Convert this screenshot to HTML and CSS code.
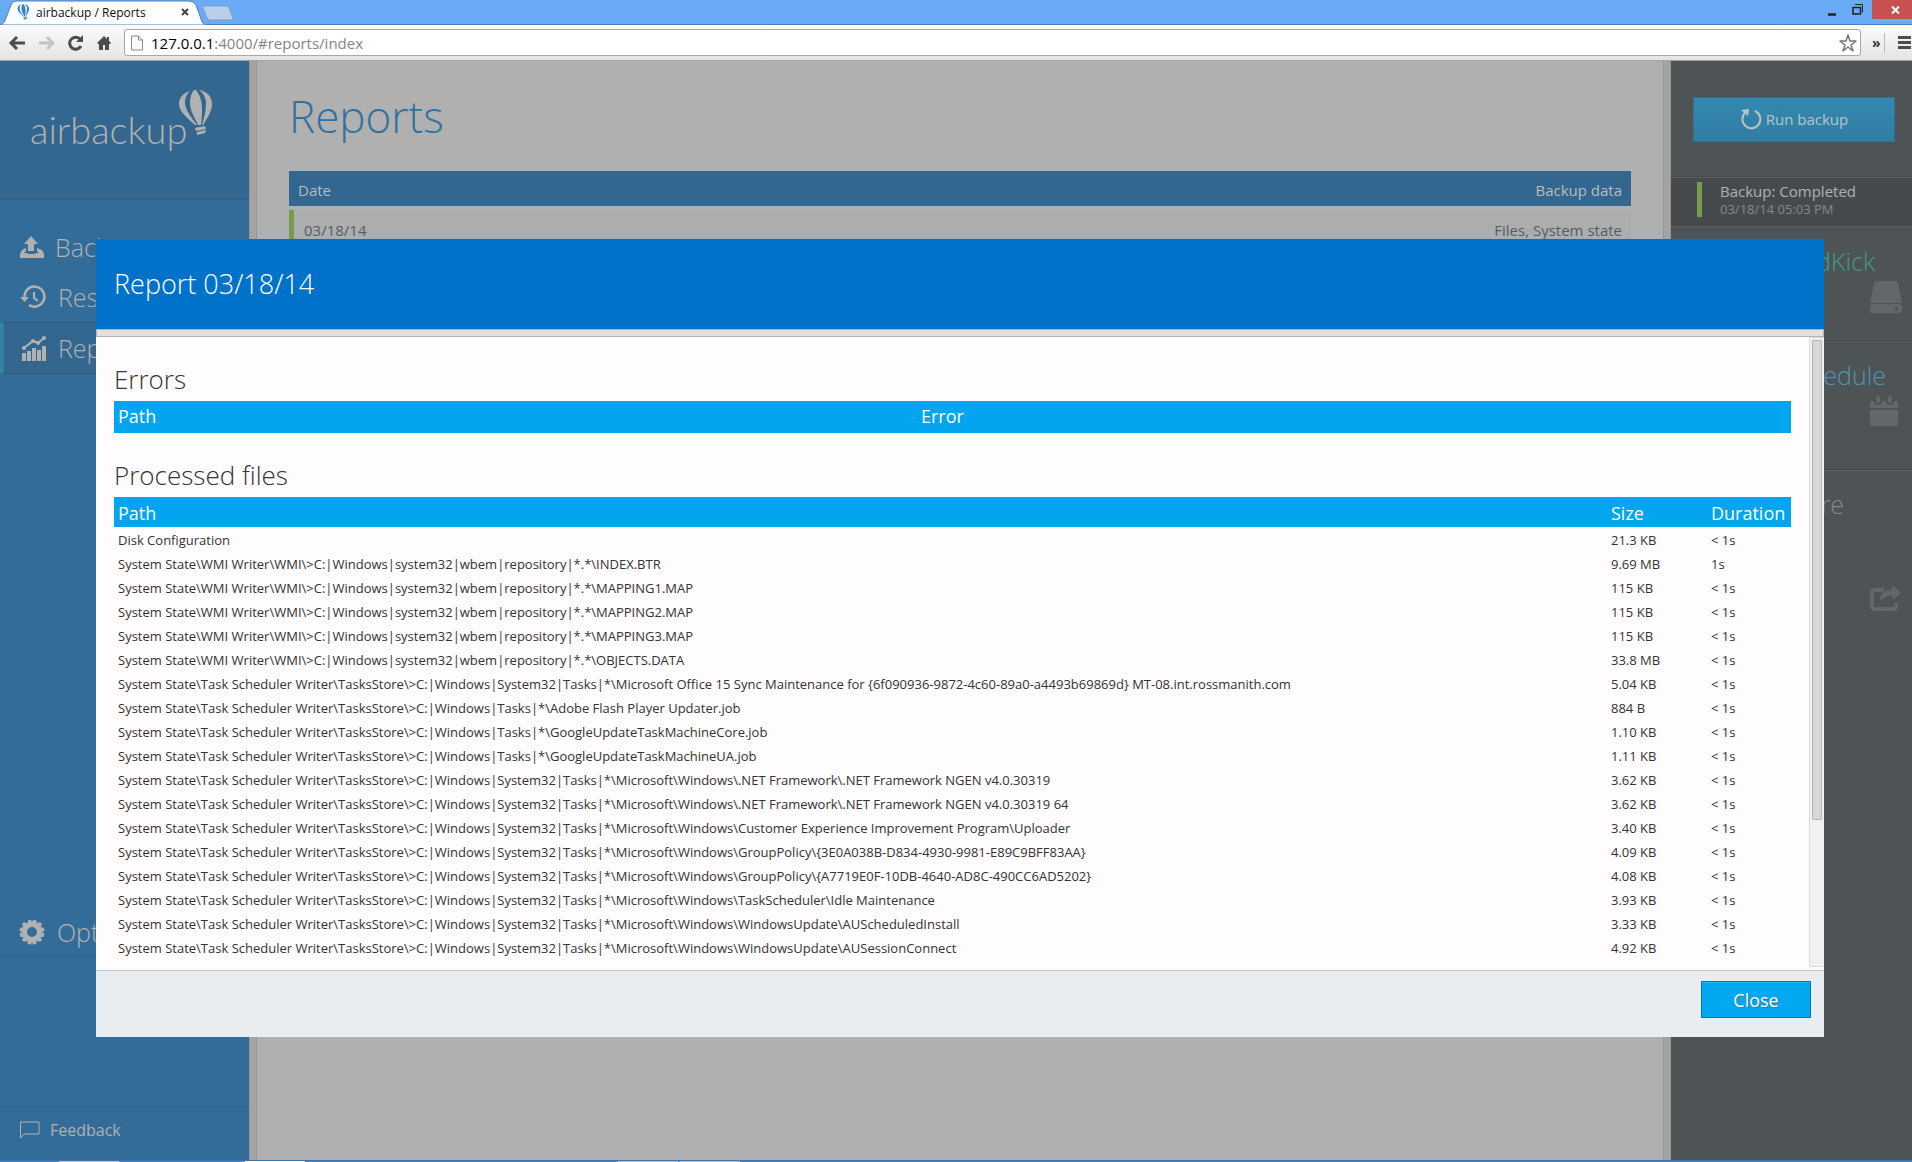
FILE: index.html
```html
<!DOCTYPE html>
<html lang="en">
<head>
<meta charset="utf-8">
<title>airbackup / Reports</title>
<link rel="stylesheet" href="styles.css">
</head>
<body>
<svg width="0" height="0" class="defs" aria-hidden="true">
  <symbol id="balloon" viewBox="0 0 34 46">
    <path d="M11 1C4 3 0 8 0 14c0 8 9 14 16 21h2C12 27 6 20 6 12c0-5 2-8 5-11z"/>
    <path d="M15 0c-3 3-4 8-4 13 0 8 5 15 8 22h3c1-6 1-12 1-17 0-8-3-14-6-18z"/>
    <path d="M20 0c4 3 7 7 7 13 0 8-2 15-4 22h1c4-7 9-13 9-21 0-7-5-13-13-14z"/>
    <path d="M16 38l10-2 1 3-10 2zM18 42l9-2-1 3-8 2z"/>
  </symbol>
</svg>

<header class="browser">
  <div class="titlebar">
    <svg class="tabs" width="240" height="25" viewBox="0 0 240 25" aria-hidden="true">
      <path d="M0 25C4 24 5 21 6 18L11 5Q12 1 16 1H189Q194 1 196 5L201 19Q202 24 206 25z" fill="#fdfdfd" stroke="#4d7fbd"/>
      <path d="M204 6H226Q228 6 229 8L233 18Q234 20 231 20H210Q208 20 207 18L203 8Q202 6 204 6z" fill="#b9cfe9" stroke="#7f9cc4"/>
    </svg>
    <div class="tab">
      <svg width="13" height="16" fill="#2c86cd"><use href="#balloon"/></svg>
      <span class="tab-title">airbackup / Reports</span>
      <button class="tab-close" aria-label="Close tab"><svg width="8" height="8" viewBox="0 0 8 8"><path d="M1 1l6 6M7 1l-6 6" stroke="#444" stroke-width="2"/></svg></button>
    </div>
    <div class="window-buttons">
      <button class="win" aria-label="Minimize"><svg width="10" height="14" viewBox="0 0 10 14"><path d="M1 11.500h8" stroke="#222" stroke-width="2.5"/></svg></button>
      <button class="win" aria-label="Restore"><svg width="12" height="12" viewBox="0 0 12 12" fill="none" stroke="#222"><path d="M1 3.500h7.500v6.500h-7.500z" stroke-width="1.500"/><path d="M3 .5h7.500v8"/></svg></button>
      <button class="win win-close" aria-label="Close window"><svg width="9" height="8" viewBox="0 0 9 8"><path d="M1 .5l7 7M8 .5l-7 7" stroke="#fff" stroke-width="2"/></svg></button>
    </div>
  </div>
  <div class="toolbar">
    <button class="tool" aria-label="Back"><svg width="18" height="16" viewBox="0 0 18 16" fill="none" stroke="#4c4c4c" stroke-width="3"><path d="M3 8h14M9 2L3 8l6 6"/></svg></button>
    <button class="tool" aria-label="Forward"><svg width="18" height="16" viewBox="0 0 18 16" fill="none" stroke="#c4c4c4" stroke-width="3"><path d="M2 8h14M10 2l6 6-6 6"/></svg></button>
    <button class="tool" aria-label="Reload"><svg width="18" height="16" viewBox="0 0 18 16"><path d="M15 11a6 6 0 1 1-1-7" fill="none" stroke="#4c4c4c" stroke-width="3"/><path d="M17 0v7h-7z" fill="#4c4c4c"/></svg></button>
    <button class="tool" aria-label="Home"><svg width="17" height="16" viewBox="0 0 17 16"><path d="M9 1L2 8l1 1h1v6h4v-5h2v5h4V9h1l1-1-2-2V2h-2v2z" fill="#4c4c4c"/></svg></button>
    <div class="address">
      <svg width="12" height="16" viewBox="0 0 12 16" fill="#fafafa" stroke="#8a8a8a"><path d="M.5 1h7l4 4v10H.5zM7.500 1v4h4"/></svg>
      <span class="url"><b>127.0.0.1</b>:4000/#reports/index</span>
      <svg width="20" height="18" viewBox="0 0 20 18"><path d="M11 1l2 6h6l-5 4 2 6-5-4-5 4 2-6-5-4h6z" fill="#fff" stroke="#777" stroke-width="1.500" stroke-linejoin="round"/></svg>
    </div>
    <span class="more">»</span>
    <button class="menu" aria-label="Menu"><svg width="13" height="13" viewBox="0 0 13 13"><path d="M0 1.500h13M0 6.500h13M0 11.500h13" stroke="#4c4c4c" stroke-width="3"/></svg></button>
  </div>
</header>

<div class="app">
  <nav class="sidebar">
    <div class="brand">
      <span class="brand-name">airbackup</span>
      <svg class="brand-mark" width="34" height="46"><use href="#balloon"/></svg>
    </div>
    <div class="nav">
      <a class="nav-item first" href="#backup"><svg width="25" height="24" viewBox="0 0 25 24"><path d="M12 1l7 8h-4v7H9V9H5zM7 13v3l-2 2h3l1 1h7l1-1h3l-2-2v-3l5 2 2 4v4H1v-4l2-4z"/></svg>Backup</a>
      <a class="nav-item" href="#restore"><svg width="27" height="24" viewBox="0 0 27 24"><path d="M4.500 13A10 10 0 1 1 9 20" fill="none" stroke="#b1b1b1" stroke-width="2.500"/><path d="M0 12h9l-4.500 5z"/><path d="M14 7v6l4 3" fill="none" stroke="#b1b1b1" stroke-width="2"/></svg>Restore</a>
      <a class="nav-item active" href="#reports"><svg width="27" height="26" viewBox="0 0 27 26"><path d="M2 18h4v8H2zM7 16h4v10H7zM12 13h4v13h-4zM17 15h4v11h-4zM22 11h4v15h-4z"/><path d="M4 13l9-7 5 2 6-5" fill="none" stroke="#b1b1b1" stroke-width="2"/><circle cx="4" cy="13" r="2"/><circle cx="13" cy="6" r="2"/><circle cx="18" cy="8" r="2"/><circle cx="24" cy="3" r="2"/></svg>Reports</a>
    </div>
    <div class="nav-foot">
      <a class="nav-item options" href="#options"><svg width="27" height="26" viewBox="-13 -13 27 26"><path fill-rule="evenodd" d="M-3.500-12L-1-12 0-10 1-12 4.500-11.500 5-8.500 8-10 10-8 8.500-5 12-4 12.500-1 10 0 12.500 2 11.500 5 8.500 5 10 8 8 10 5 8.500 4 12 1 12.500 0 10-1 12.500-4 12-5 8.500-8 10-10 8-8.500 5-11.500 5-12.500 2-10 0-12.500-1-12-4-8.500-5-10-8-8-10-5-8.500zM0-5A5 5 0 1 0 0 5 5 5 0 1 0 0-5z"/></svg>Options</a>
      <a class="feedback" href="#feedback"><svg width="20" height="18" viewBox="0 0 20 18"><path d="M.5 1h18.500v12H4L.5 17z" fill="none" stroke="#b1b1b1"/></svg>Feedback</a>
    </div>
  </nav>
  <div class="gutter"></div>

  <main class="main">
    <h1>Reports</h1>
    <table class="reports">
      <thead><tr><th>Date</th><th>Backup data</th></tr></thead>
      <tbody><tr><td>03/18/14</td><td>Files, System state</td></tr></tbody>
    </table>
  </main>
  <div class="gutter"></div>

  <aside class="side">
    <div class="run-box"><button class="run"><svg width="22" height="22" viewBox="0 0 22 22"><path d="M15 3A9 9 0 1 1 6 4" fill="none" stroke="#b9c4c8" stroke-width="2"/><path d="M1 2l8-1-1 7z" fill="#b9c4c8"/></svg>Run backup</button></div>
    <div class="status"><div class="status-text"><strong>Backup: Completed</strong><small>03/18/14 05:03 PM</small></div></div>
    <section class="card seed"><h2>SeedKick</h2><svg width="32" height="32" viewBox="0 0 32 32"><path d="M7 0h18q3 0 3 3l4 19H0L4 3q0-3 3-3z"/><path fill-rule="evenodd" d="M3 23h26q3 0 3 3v3q0 3-3 3H3q-3 0-3-3v-3q0-3 3-3zm23 3a2 2 0 1 0 1 0z"/></svg></section>
    <section class="card schedule"><h2>Schedule</h2><svg width="32" height="32" viewBox="0 0 32 32"><path d="M2 6h4v1q3 5 6 0V6h2v1q3 5 6 0V6h2v1q4 5 5-1q3 0 3 2v5H2z" opacity="0"/><path d="M1 8q0-2 2-2h2q0 4 4 4t4-4h4q0 4 4 4t4-4h2q2 0 2 2v5H1zM1 15h28v14q0 2-2 2H3q-2 0-2-2z"/><rect x="7" y="1" width="4" height="7" rx="2"/><rect x="19" y="1" width="4" height="7" rx="2"/></svg></section>
    <section class="card share"><h2>Share</h2><svg width="32" height="28" viewBox="0 0 32 28"><path d="M14 6H5q-3 0-3 3v13q0 3 3 3h18q3 0 3-3v-3" fill="none" stroke="#636769" stroke-width="4"/><path d="M22 0l10 9-10 8v-5q-9 0-13 7 0-13 13-14z" stroke="#4e5355"/></svg></section>
  </aside>

  <div class="dialog" role="dialog" aria-labelledby="dialog-title">
    <h2 class="dialog-title" id="dialog-title">Report 03/18/14</h2>
    <div class="hbar"></div>
    <div class="dialog-body">
      <div class="content">
        <h3>Errors</h3>
        <table class="data errors">
          <thead><tr><th>Path</th><th>Error</th></tr></thead>
        </table>
        <h3>Processed files</h3>
        <table class="data files">
          <thead><tr><th>Path</th><th class="size">Size</th><th class="duration">Duration</th></tr></thead>
          <tbody>
            <tr><td>Disk Configuration</td><td>21.3 KB</td><td>&lt; 1s</td></tr>
            <tr><td>System State\WMI Writer\WMI\&gt;C:|Windows|system32|wbem|repository|*.*\INDEX.BTR</td><td>9.69 MB</td><td>1s</td></tr>
            <tr><td>System State\WMI Writer\WMI\&gt;C:|Windows|system32|wbem|repository|*.*\MAPPING1.MAP</td><td>115 KB</td><td>&lt; 1s</td></tr>
            <tr><td>System State\WMI Writer\WMI\&gt;C:|Windows|system32|wbem|repository|*.*\MAPPING2.MAP</td><td>115 KB</td><td>&lt; 1s</td></tr>
            <tr><td>System State\WMI Writer\WMI\&gt;C:|Windows|system32|wbem|repository|*.*\MAPPING3.MAP</td><td>115 KB</td><td>&lt; 1s</td></tr>
            <tr><td>System State\WMI Writer\WMI\&gt;C:|Windows|system32|wbem|repository|*.*\OBJECTS.DATA</td><td>33.8 MB</td><td>&lt; 1s</td></tr>
            <tr><td>System State\Task Scheduler Writer\TasksStore\&gt;C:|Windows|System32|Tasks|*\Microsoft Office 15 Sync Maintenance for {6f090936-9872-4c60-89a0-a4493b69869d} MT-08.int.rossmanith.com</td><td>5.04 KB</td><td>&lt; 1s</td></tr>
            <tr><td>System State\Task Scheduler Writer\TasksStore\&gt;C:|Windows|Tasks|*\Adobe Flash Player Updater.job</td><td>884 B</td><td>&lt; 1s</td></tr>
            <tr><td>System State\Task Scheduler Writer\TasksStore\&gt;C:|Windows|Tasks|*\GoogleUpdateTaskMachineCore.job</td><td>1.10 KB</td><td>&lt; 1s</td></tr>
            <tr><td>System State\Task Scheduler Writer\TasksStore\&gt;C:|Windows|Tasks|*\GoogleUpdateTaskMachineUA.job</td><td>1.11 KB</td><td>&lt; 1s</td></tr>
            <tr><td>System State\Task Scheduler Writer\TasksStore\&gt;C:|Windows|System32|Tasks|*\Microsoft\Windows\.NET Framework\.NET Framework NGEN v4.0.30319</td><td>3.62 KB</td><td>&lt; 1s</td></tr>
            <tr><td>System State\Task Scheduler Writer\TasksStore\&gt;C:|Windows|System32|Tasks|*\Microsoft\Windows\.NET Framework\.NET Framework NGEN v4.0.30319 64</td><td>3.62 KB</td><td>&lt; 1s</td></tr>
            <tr><td>System State\Task Scheduler Writer\TasksStore\&gt;C:|Windows|System32|Tasks|*\Microsoft\Windows\Customer Experience Improvement Program\Uploader</td><td>3.40 KB</td><td>&lt; 1s</td></tr>
            <tr><td>System State\Task Scheduler Writer\TasksStore\&gt;C:|Windows|System32|Tasks|*\Microsoft\Windows\GroupPolicy\{3E0A038B-D834-4930-9981-E89C9BFF83AA}</td><td>4.09 KB</td><td>&lt; 1s</td></tr>
            <tr><td>System State\Task Scheduler Writer\TasksStore\&gt;C:|Windows|System32|Tasks|*\Microsoft\Windows\GroupPolicy\{A7719E0F-10DB-4640-AD8C-490CC6AD5202}</td><td>4.08 KB</td><td>&lt; 1s</td></tr>
            <tr><td>System State\Task Scheduler Writer\TasksStore\&gt;C:|Windows|System32|Tasks|*\Microsoft\Windows\TaskScheduler\Idle Maintenance</td><td>3.93 KB</td><td>&lt; 1s</td></tr>
            <tr><td>System State\Task Scheduler Writer\TasksStore\&gt;C:|Windows|System32|Tasks|*\Microsoft\Windows\WindowsUpdate\AUScheduledInstall</td><td>3.33 KB</td><td>&lt; 1s</td></tr>
            <tr><td>System State\Task Scheduler Writer\TasksStore\&gt;C:|Windows|System32|Tasks|*\Microsoft\Windows\WindowsUpdate\AUSessionConnect</td><td>4.92 KB</td><td>&lt; 1s</td></tr>
          </tbody>
        </table>
      </div>
      <div class="track"><div class="thumb"></div></div>
    </div>
    <footer class="dialog-foot"><button class="close">Close</button></footer>
  </div>
</div>
<div class="taskbar"><span class="task dim"></span><span class="task"></span><span class="task dim far"></span><span class="task dim"></span></div>
</body>
</html>
```
FILE: styles.css
```css
* { box-sizing: border-box; }
body {
  margin: 0;
  height: 100vh;
  display: flex;
  flex-direction: column;
  overflow: hidden;
  font-family: "Open Sans", sans-serif;
  color: #333;
}
button { font: inherit; border: 0; padding: 0; background: none; }
a { text-decoration: none; color: inherit; }
h1, h2, h3 { margin: 0; font-weight: 300; }
table { border-collapse: collapse; width: 100%; }
th { font-weight: 400; text-align: left; }
svg { flex: none; display: block; }
.defs { position: absolute; }

/* browser frame */
.titlebar {
  position: relative;
  display: flex;
  justify-content: space-between;
  height: 25px;
  background: #6aabf7;
  border-bottom: 1px solid #4d7fbd;
}
.tabs { position: absolute; left: 0; top: 0; }
.tab {
  position: relative;
  display: flex;
  align-items: center;
  width: 189px;
  padding-left: 17px;
  gap: 6px;
  color: #111;
  font: 12px "Open Sans", sans-serif;
}
.tab-title { flex: 1; }
.window-buttons { display: flex; align-items: flex-start; }
.win { display: flex; align-items: center; justify-content: center; width: 26px; height: 19px; }
.win-close { width: 40px; margin-left: 1px; background: #c75050; padding-left: 6px; }
.toolbar {
  display: flex;
  align-items: center;
  height: 36px;
  padding-left: 8px;
  background: linear-gradient(#fbfbfb, #e4e4e4);
  border-bottom: 1px solid #a4a4a4;
}
.tool { width: 29px; display: flex; }
.address {
  flex: 1;
  display: flex;
  align-items: center;
  gap: 8px;
  height: 27px;
  padding: 0 3px 0 6px;
  background: #fff;
  border: 1px solid #a8a8a8;
  border-radius: 3px;
}
.url { flex: 1; color: #858585; font: 15px "Open Sans", sans-serif; }
.url b { font-weight: 400; color: #000; }
.more { width: 24px; padding-left: 11px; line-height: 20px; font-size: 14px; font-weight: 700; border-right: 1px solid #bbb; }
.menu { width: 27px; padding-left: 13px; }

/* page */
.app { position: relative; flex: 1; min-height: 0; display: flex; }
.gutter {
  width: 8px;
  background: #a3a3a3;
  border: solid #979797;
  border-width: 0 1px;
}
.sidebar {
  width: 249px;
  display: flex;
  flex-direction: column;
  background: #346c99;
  color: #b1b1b1;
  fill: #b1b1b1;
}
.brand {
  display: flex;
  align-items: flex-start;
  height: 139px;
  padding: 29px 0 0 30px;
  background: #33678f;
  border-bottom: 1px solid #2f6088;
}
.brand-name { width: 149px; padding-top: 15px; font: 300 38px/48px Lato, sans-serif; }
.nav { padding-top: 22px; }
.nav-item {
  display: flex;
  align-items: center;
  gap: 11px;
  height: 50px;
  padding-left: 20px;
  font-size: 25px;
  font-weight: 300;
}
.first { padding-left: 19px; }
.active {
  height: 52px;
  padding-left: 16px;
  background: #33678f;
  border: solid #2f5d84;
  border-width: 1px 0;
  border-left: 4px solid #3481a3;
}
.nav-foot { margin-top: auto; }
.options { padding-left: 19px; margin-bottom: 149px; border-bottom: 1px solid #2f6088; }
.feedback {
  display: flex;
  align-items: center;
  gap: 10px;
  height: 54px;
  padding: 0 0 8px 20px;
  border-top: 1px solid #2f6088;
  font-size: 16px;
}
.main { flex: 1; padding: 24px 32px; background: #b0b0b0; }
.main h1 { color: #33709f; font-size: 44px; line-height: 62px; }
.reports { margin-top: 24px; font-size: 15px; color: #5c5c5c; }
.reports th { height: 37px; padding: 2px 9px 0; background: #33678f; color: #b9bcbe; }
.reports th:last-child, .reports td:last-child { text-align: right; }
.reports td { height: 42px; padding: 0 9px; background: #abadae; border-top: 4px solid #b0b0b0; }
.reports td:first-child { padding-left: 15px; box-shadow: inset 5px 0 #78994e; }

.side { width: 241px; background: #4e5355; color: #b1b1b1; fill: #636769; }
.run-box { height: 116px; padding: 36px 17px 0 22px; border-bottom: 1px solid #45494b; }
.run {
  display: flex;
  align-items: center;
  justify-content: center;
  gap: 4px;
  width: 100%;
  height: 45px;
  padding-bottom: 1px;
  background: linear-gradient(#3389b0, #317da4);
  border: 1px solid #2f7296;
  color: #b9c4c8;
  font-size: 15px;
}
.status { height: 50px; padding: 4px 0 0 26px; background: #474a4c; border: solid #5a5e60; border-width: 1px 0; }
.status-text { display: flex; flex-direction: column; height: 35px; padding-left: 18px; border-left: 5px solid #78994e; }
.status-text strong { font-weight: 400; font-size: 15px; line-height: 19px; }
.status-text small { font-size: 13px; line-height: 16px; color: #85888a; }
.card { padding: 14px 10px 0 112px; border-bottom: 1px solid #45494b; box-shadow: 0 1px #5a5e60; }
.card h2 { font-size: 25px; line-height: 40px; }
.card svg { margin-left: auto; }
.seed { height: 114px; padding-left: 104px; color: #3f9b88; }
.schedule { height: 129px; color: #4c93b3; }
.schedule svg { margin-right: 1px; }
.share { padding-left: 108px; border: 0; box-shadow: none; color: #85888a; }
.share svg { margin-top: 60px; }

/* report dialog */
.dialog {
  position: absolute;
  inset: 178px 88px 123px 96px;
  display: flex;
  flex-direction: column;
  background: #fefcfd;
}
.dialog-title {
  height: 90px;
  padding-left: 18px;
  background: #0072ca;
  color: #fff;
  font-size: 27px;
  line-height: 90px;
}
.hbar { height: 8px; background: #e1e1e1; border: 1px solid #b4b4b4; }
.dialog-body { flex: 1; min-height: 0; display: flex; justify-content: space-between; }
.content { flex: 1; padding: 24px 18px 0; overflow: hidden; }
.content h3 { height: 40px; font-size: 26px; line-height: 36px; }
.data th { padding: 2px 4px 0; background: #02a5ee; color: #fff; font-size: 18px; line-height: 28px; }
.errors { margin-bottom: 24px; }
.errors th { width: 803px; padding: 0 4px 2px; line-height: 30px; }
.errors th:last-child { width: auto; }
.files .size { width: 100px; }
.files .duration { width: 84px; }
.files td { height: 24px; padding: 2px 4px 0; font-size: 13px; line-height: 22px; white-space: nowrap; }
.track { width: 15px; margin-bottom: 3px; padding: 2px; background: #f1f1f1; border: solid #dcdcdc; border-width: 1px 0 1px 1px; }
.thumb { width: 10px; height: 77%; background: #d8d8d8; border: 1px solid #b4b4b4; border-radius: 1px; }
.dialog-foot {
  display: flex;
  justify-content: flex-end;
  height: 67px;
  padding: 10px 13px;
  background: #e9edf0;
  border-top: 1px solid #c6cacd;
}
.close {
  width: 110px;
  height: 37px;
  background: #02a9f1;
  border: 1px solid #0a74b8;
  box-shadow: inset 0 1px #22b8f8;
  color: #fff;
  font-size: 18px;
  text-shadow: 1px 1px 1px #4a6f88;
}
.taskbar { display: flex; height: 2px; padding-left: 59px; background: #4a86c6; border-top: 1px solid #3f74ae; }
.task { width: 60px; margin-right: 126px; background: #fff; }
.dim { background: #a9c2e2; }
.far { margin: 0 2px 0 187px; }
```
